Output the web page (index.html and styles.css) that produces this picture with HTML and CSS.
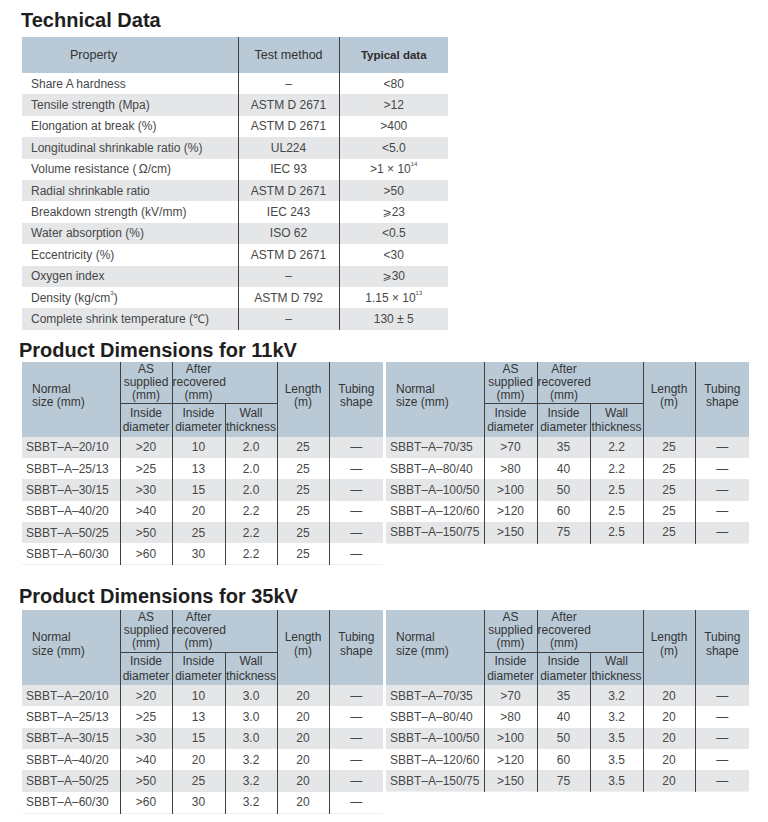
FILE: index.html
```html
<!DOCTYPE html>
<html lang="en">
<head>
<meta charset="utf-8">
<title>Technical Data</title>
<link rel="stylesheet" href="styles.css">
</head>
<body>
<main class="page">
  <h2 class="title title-tech">Technical Data</h2>
  <table class="tech">
    <colgroup><col class="c-prop"><col class="c-method"><col class="c-data"></colgroup>
    <thead>
      <tr><th class="th-prop">Property</th><th>Test method</th><th class="th-typ">Typical data</th></tr>
    </thead>
    <tbody>
      <tr><td>Share A hardness</td><td>–</td><td>&lt;80</td></tr>
      <tr><td>Tensile strength (Mpa)</td><td>ASTM D 2671</td><td>&gt;12</td></tr>
      <tr><td>Elongation at break (%)</td><td>ASTM D 2671</td><td>&gt;400</td></tr>
      <tr><td>Longitudinal shrinkable ratio (%)</td><td>UL224</td><td>&lt;5.0</td></tr>
      <tr><td>Volume resistance (&thinsp;Ω/cm)</td><td>IEC 93</td><td>&gt;1 × 10<sup>14</sup></td></tr>
      <tr><td>Radial shrinkable ratio</td><td>ASTM D 2671</td><td>&gt;50</td></tr>
      <tr><td>Breakdown strength (kV/mm)</td><td>IEC 243</td><td><span class="ge">⩾</span>23</td></tr>
      <tr><td>Water absorption (%)</td><td>ISO 62</td><td>&lt;0.5</td></tr>
      <tr><td>Eccentricity (%)</td><td>ASTM D 2671</td><td>&lt;30</td></tr>
      <tr><td>Oxygen index</td><td>–</td><td><span class="ge">⩾</span>30</td></tr>
      <tr><td>Density (kg/cm<sup>3</sup>)</td><td>ASTM D 792</td><td>1.15 × 10<sup>13</sup></td></tr>
      <tr><td>Complete shrink temperature (℃)</td><td>–</td><td>130 ± 5</td></tr>
    </tbody>
  </table>

  <h2 class="title title-dim">Product Dimensions for 11kV</h2>
  <div class="pair">
    <table class="dim">
      <colgroup><col class="d1"><col class="d2"><col class="d3"><col class="d4"><col class="d5"><col class="d6"></colgroup>
      <thead>
        <tr class="h1"><th rowspan="2" class="th-size">Normal<br>size (mm)</th><th class="th-as">AS<br>supplied<br>(mm)</th><th colspan="2" class="th-after">After<br>recovered<br>(mm)</th><th rowspan="2" class="th-side">Length<br>(m)</th><th rowspan="2" class="th-side">Tubing<br>shape</th></tr>
        <tr class="h2"><th>Inside<br>diameter</th><th>Inside<br>diameter</th><th>Wall<br>thickness</th></tr>
      </thead>
      <tbody>
        <tr><td>SBBT–A–20/10</td><td>&gt;20</td><td>10</td><td>2.0</td><td>25</td><td>—</td></tr>
        <tr><td>SBBT–A–25/13</td><td>&gt;25</td><td>13</td><td>2.0</td><td>25</td><td>—</td></tr>
        <tr><td>SBBT–A–30/15</td><td>&gt;30</td><td>15</td><td>2.0</td><td>25</td><td>—</td></tr>
        <tr><td>SBBT–A–40/20</td><td>&gt;40</td><td>20</td><td>2.2</td><td>25</td><td>—</td></tr>
        <tr><td>SBBT–A–50/25</td><td>&gt;50</td><td>25</td><td>2.2</td><td>25</td><td>—</td></tr>
        <tr><td>SBBT–A–60/30</td><td>&gt;60</td><td>30</td><td>2.2</td><td>25</td><td>—</td></tr>
      </tbody>
    </table>
    <table class="dim dim-right">
      <colgroup><col class="d1"><col class="d2"><col class="d3"><col class="d4"><col class="d5"><col class="d6"></colgroup>
      <thead>
        <tr class="h1"><th rowspan="2" class="th-size">Normal<br>size (mm)</th><th class="th-as">AS<br>supplied<br>(mm)</th><th colspan="2" class="th-after">After<br>recovered<br>(mm)</th><th rowspan="2" class="th-side">Length<br>(m)</th><th rowspan="2" class="th-side">Tubing<br>shape</th></tr>
        <tr class="h2"><th>Inside<br>diameter</th><th>Inside<br>diameter</th><th>Wall<br>thickness</th></tr>
      </thead>
      <tbody>
        <tr><td>SBBT–A–70/35</td><td>&gt;70</td><td>35</td><td>2.2</td><td>25</td><td>—</td></tr>
        <tr><td>SBBT–A–80/40</td><td>&gt;80</td><td>40</td><td>2.2</td><td>25</td><td>—</td></tr>
        <tr><td>SBBT–A–100/50</td><td>&gt;100</td><td>50</td><td>2.5</td><td>25</td><td>—</td></tr>
        <tr><td>SBBT–A–120/60</td><td>&gt;120</td><td>60</td><td>2.5</td><td>25</td><td>—</td></tr>
        <tr><td>SBBT–A–150/75</td><td>&gt;150</td><td>75</td><td>2.5</td><td>25</td><td>—</td></tr>
      </tbody>
    </table>
  </div>

  <h2 class="title title-dim title-35">Product Dimensions for 35kV</h2>
  <div class="pair">
    <table class="dim">
      <colgroup><col class="d1"><col class="d2"><col class="d3"><col class="d4"><col class="d5"><col class="d6"></colgroup>
      <thead>
        <tr class="h1"><th rowspan="2" class="th-size">Normal<br>size (mm)</th><th class="th-as">AS<br>supplied<br>(mm)</th><th colspan="2" class="th-after">After<br>recovered<br>(mm)</th><th rowspan="2" class="th-side">Length<br>(m)</th><th rowspan="2" class="th-side">Tubing<br>shape</th></tr>
        <tr class="h2"><th>Inside<br>diameter</th><th>Inside<br>diameter</th><th>Wall<br>thickness</th></tr>
      </thead>
      <tbody>
        <tr><td>SBBT–A–20/10</td><td>&gt;20</td><td>10</td><td>3.0</td><td>20</td><td>—</td></tr>
        <tr><td>SBBT–A–25/13</td><td>&gt;25</td><td>13</td><td>3.0</td><td>20</td><td>—</td></tr>
        <tr><td>SBBT–A–30/15</td><td>&gt;30</td><td>15</td><td>3.0</td><td>20</td><td>—</td></tr>
        <tr><td>SBBT–A–40/20</td><td>&gt;40</td><td>20</td><td>3.2</td><td>20</td><td>—</td></tr>
        <tr><td>SBBT–A–50/25</td><td>&gt;50</td><td>25</td><td>3.2</td><td>20</td><td>—</td></tr>
        <tr><td>SBBT–A–60/30</td><td>&gt;60</td><td>30</td><td>3.2</td><td>20</td><td>—</td></tr>
      </tbody>
    </table>
    <table class="dim dim-right">
      <colgroup><col class="d1"><col class="d2"><col class="d3"><col class="d4"><col class="d5"><col class="d6"></colgroup>
      <thead>
        <tr class="h1"><th rowspan="2" class="th-size">Normal<br>size (mm)</th><th class="th-as">AS<br>supplied<br>(mm)</th><th colspan="2" class="th-after">After<br>recovered<br>(mm)</th><th rowspan="2" class="th-side">Length<br>(m)</th><th rowspan="2" class="th-side">Tubing<br>shape</th></tr>
        <tr class="h2"><th>Inside<br>diameter</th><th>Inside<br>diameter</th><th>Wall<br>thickness</th></tr>
      </thead>
      <tbody>
        <tr><td>SBBT–A–70/35</td><td>&gt;70</td><td>35</td><td>3.2</td><td>20</td><td>—</td></tr>
        <tr><td>SBBT–A–80/40</td><td>&gt;80</td><td>40</td><td>3.2</td><td>20</td><td>—</td></tr>
        <tr><td>SBBT–A–100/50</td><td>&gt;100</td><td>50</td><td>3.5</td><td>20</td><td>—</td></tr>
        <tr><td>SBBT–A–120/60</td><td>&gt;120</td><td>60</td><td>3.5</td><td>20</td><td>—</td></tr>
        <tr><td>SBBT–A–150/75</td><td>&gt;150</td><td>75</td><td>3.5</td><td>20</td><td>—</td></tr>
      </tbody>
    </table>
  </div>
</main>
</body>
</html>
```
FILE: styles.css
```css
* { box-sizing: border-box; }

html, body {
  margin: 0;
  padding: 0;
  background: #ffffff;
}

body {
  font-family: "Liberation Sans", Arial, sans-serif;
  color: #474747;
}

.page {
  padding-left: 22px;
  width: 768px;
}

.title {
  margin: 0;
  font-size: 20px;
  line-height: 24px;
  font-weight: bold;
  color: #1e1e1e;
}

.title-tech {
  margin-top: 8px;
  margin-bottom: 5px;
  margin-left: -1px;
}

.title-dim {
  margin-top: 8px;
  margin-bottom: 0;
  margin-left: -3px;
}

.title-35 {
  margin-top: 19px;
  margin-bottom: 2px;
}

table {
  border-collapse: collapse;
  table-layout: fixed;
  border-spacing: 0;
}

th, td {
  padding: 0;
  font-weight: normal;
}

/* Technical data table */
.tech {
  width: 426px;
}

.tech .c-prop { width: 216px; }
.tech .c-method { width: 101px; }
.tech .c-data { width: 109px; }

.tech thead tr {
  height: 36px;
  background: #b9c9d6;
}

.tech th {
  font-size: 12.5px;
  color: #333;
  text-align: center;
  vertical-align: middle;
}

.tech th.th-prop {
  text-align: left;
  padding-left: 48px;
}

.tech th.th-typ {
  font-weight: bold;
  font-size: 11.5px;
  color: #2c2c2c;
}

.tech th + th,
.tech td + td {
  border-left: 1px solid #404040;
}

.tech tbody tr {
  height: 21.4px;
}

.tech tbody tr:nth-child(even) {
  background: #e4e6e8;
}

.tech td {
  font-size: 12px;
  text-align: center;
  vertical-align: middle;
  white-space: nowrap;
}

.tech td:first-child {
  text-align: left;
  padding-left: 9px;
}

.ge {
  font-family: "DejaVu Sans", sans-serif;
  font-size: 11px;
}

sup {
  font-size: 6px;
  vertical-align: top;
  line-height: 1;
  position: relative;
  top: -1px;
}

/* Dimension tables */
.pair {
  display: flex;
  gap: 3px;
  align-items: flex-start;
}

.dim {
  width: 361px;
}

.dim-right {
  width: 362px;
}

.dim .d1 { width: 98px; }
.dim .d2 { width: 52px; }
.dim .d3 { width: 53px; }
.dim .d4 { width: 52px; }
.dim .d5 { width: 52px; }
.dim .d6 { width: 54px; }
.dim-right .d2 { width: 53px; }
.dim-right .d4 { width: 53px; }
.dim-right .d5 { width: 52px; }
.dim-right .d6 { width: 54px; }

.dim thead {
  background: #b9c9d6;
}

.dim th {
  font-size: 12px;
  color: #353535;
  text-align: center;
  vertical-align: middle;
  line-height: 13px;
  white-space: nowrap;
}

.dim .h1 { height: 42px; }
.dim .h2 { height: 33px; }

.dim .h2 th {
  line-height: 14.5px;
  border-left: 1px solid #404040;
}

.dim th.th-size {
  text-align: left;
  padding-left: 10px;
  padding-bottom: 6px;
  line-height: 13.5px;
}

.dim th.th-side {
  padding-bottom: 6px;
  line-height: 13.5px;
  border-left: 1px solid #404040;
}

.dim th.th-as,
.dim th.th-after {
  border-left: 1px solid #404040;
  border-bottom: 1px solid #404040;
}

.dim th.th-after {
  text-align: center;
  padding-right: 52px;
}

.dim tbody tr {
  height: 21.33px;
}

.dim tbody tr:nth-child(odd) {
  background: #e4e6e8;
}

.dim tbody tr:last-child {
  border-bottom: 1px solid #f0f0f0;
}

.dim td {
  font-size: 12px;
  text-align: center;
  vertical-align: middle;
  white-space: nowrap;
}

.dim td + td {
  border-left: 1px solid #404040;
}

.dim td:first-child {
  text-align: left;
  padding-left: 4px;
}
```
